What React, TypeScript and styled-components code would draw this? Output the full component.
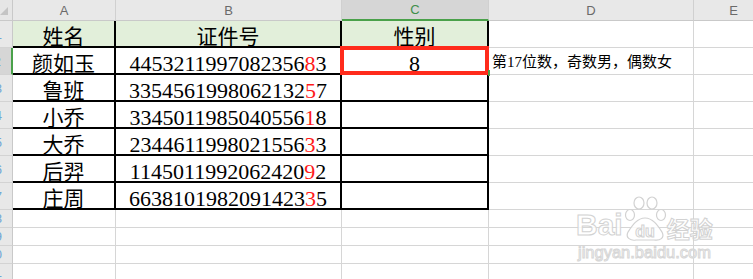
import React from 'react';
import styled, { createGlobalStyle, css } from 'styled-components';

const GlobalStyle = createGlobalStyle`
  html, body {
    margin: 0;
    padding: 0;
    background: #fff;
    overflow: hidden;
  }
  #root {
    width: 753px;
    height: 279px;
    overflow: hidden;
    position: relative;
  }
`;

const people = [
  { name: '颜如玉', id: '445321199708235683' },
  { name: '鲁班', id: '335456199806213257' },
  { name: '小乔', id: '334501198504055618' },
  { name: '大乔', id: '234461199802155633' },
  { name: '后羿', id: '114501199206242092' },
  { name: '庄周', id: '663810198209142335' },
];

const columns = ['A', 'B', 'C', 'D', 'E'];
const extraRows = [8, 9, 10, 11];

const Sheet = styled.div`
  display: grid;
  grid-template-columns: 13px 103px 226px 147px 205px 80px;
  grid-template-rows: 21px repeat(7, 27px) repeat(4, 18px);
  width: 774px;
  background: #fff;
`;

const Corner = styled.div`
  box-sizing: border-box;
  background: #e6e6e6;
  border-right: 1px solid #c9c9c9;
  border-bottom: 1px solid #c9c9c9;
  display: flex;
  align-items: flex-end;
  justify-content: flex-start;
  padding: 0 0 5px 0;
`;

const ColHead = styled.div<{ $active?: boolean }>`
  box-sizing: border-box;
  background: #e8e8e8;
  border-right: 1px solid #d0d0d0;
  border-bottom: 1px solid #c9c9c9;
  display: flex;
  align-items: center;
  justify-content: center;
  font-family: 'Liberation Sans', Arial, sans-serif;
  font-size: 13px;
  color: #6a6a6a;
  ${(p) =>
    p.$active &&
    css`
      background: #d6d6d6;
      border-bottom: 2px solid #4aa14a;
      color: #3f8f4a;
    `}
`;

const RowHead = styled.div<{ $active?: boolean }>`
  box-sizing: border-box;
  background: #e8e8e8;
  border-right: 1px solid #c9c9c9;
  border-bottom: 1px solid #d3d3d3;
  display: flex;
  align-items: center;
  justify-content: flex-end;
  padding-right: 10px;
  overflow: hidden;
  white-space: nowrap;
  font-family: 'Liberation Sans', Arial, sans-serif;
  font-size: 13px;
  color: #6ea6d6;
  ${(p) =>
    p.$active &&
    css`
      background: #d6d6d6;
      border-right: 2px solid #4aa14a;
    `}
`;

const Cell = styled.div<{ $header?: boolean; $table?: boolean; $left?: boolean }>`
  box-sizing: border-box;
  position: relative;
  border-right: 1px solid #d6d6d6;
  border-bottom: 1px solid #d6d6d6;
  display: flex;
  align-items: flex-end;
  justify-content: ${(p) => (p.$left ? 'flex-start' : 'center')};
  white-space: nowrap;
  color: #000;
  font-family: 'Liberation Serif', 'Noto Sans CJK SC', serif;
  font-size: 22px;
  line-height: 18px;
  ${(p) =>
    p.$table &&
    css`
      border-right: 2px solid #000;
      border-bottom: 2px solid #000;
    `}
  ${(p) =>
    p.$header &&
    css`
      background: #e2efda;
    `}
`;

const Cjk = styled.span`
  font-family: 'Noto Sans CJK SC', sans-serif;
  font-size: 21px;
  line-height: 20px;
  padding-bottom: 1px;
`;

const Note = styled.span`
  font-family: 'Liberation Serif', 'Noto Sans CJK SC', serif;
  font-size: 15px;
  line-height: 15px;
  padding: 0 0 4px 3px;
  position: relative;
  z-index: 2;
`;

const Red = styled.span`
  color: #ff1a1a;
`;

const Marked = styled.div`
  position: absolute;
  left: -2px;
  top: -2px;
  right: -2px;
  bottom: -2px;
  border: 4px solid #ff2b1c;
  pointer-events: none;
  z-index: 1;
`;

const FillHandle = styled.div`
  position: absolute;
  right: -3px;
  bottom: -3px;
  width: 2px;
  height: 6px;
  background: #4aa14a;
  z-index: 2;
`;

const Watermark = styled.div`
  position: absolute;
  left: 576px;
  top: 196px;
  display: flex;
  flex-direction: column;
  align-items: flex-start;
  pointer-events: none;
`;

const MarkTop = styled.div`
  display: flex;
  align-items: flex-end;
  height: 46px;
`;

const BaiText = styled.span`
  font-family: 'Liberation Sans', Arial, sans-serif;
  font-weight: bold;
  font-size: 30px;
  line-height: 30px;
  color: rgba(255, 255, 255, 0.85);
  -webkit-text-stroke: 1px #d2d2d2;
  padding-bottom: 2px;
`;

const JingYan = styled.span`
  font-family: 'Noto Sans CJK SC', sans-serif;
  font-weight: bold;
  font-size: 23px;
  line-height: 26px;
  color: rgba(255, 255, 255, 0.85);
  -webkit-text-stroke: 1px #d2d2d2;
  padding-bottom: 1px;
`;

const Url = styled.span`
  font-family: 'Liberation Sans', Arial, sans-serif;
  font-size: 16.5px;
  line-height: 20px;
  color: rgba(255, 255, 255, 0.85);
  -webkit-text-stroke: 1px #d6d6d6;
  margin-left: 2px;
`;

const Paw = () => (
  <svg width="44" height="46" viewBox="0 0 44 46">
    <g fill="rgba(255,255,255,0.85)" stroke="#d2d2d2" strokeWidth="1.2">
      <ellipse cx="7" cy="19" rx="4.5" ry="5.5" />
      <ellipse cx="16" cy="7" rx="5" ry="6" />
      <ellipse cx="29" cy="7" rx="5" ry="6" />
      <ellipse cx="38" cy="19" rx="4.5" ry="5.5" />
      <path d="M22 22 C 14 22, 9 30, 5 36 C 2 42, 8 45, 13 44 L 31 44 C 37 45, 42 42, 39 36 C 35 30, 30 22, 22 22 Z" />
    </g>
    <text
      x="22"
      y="41"
      textAnchor="middle"
      fontFamily="Liberation Sans, Arial, sans-serif"
      fontWeight="bold"
      fontSize="16"
      fill="rgba(255,255,255,0.9)"
      stroke="#d2d2d2"
      strokeWidth="1"
    >
      du
    </text>
  </svg>
);

const CornerMark = () => (
  <svg width="8" height="8" viewBox="0 0 8 8">
    <polygon points="8,0 8,8 0,8" fill="#c4c4c4" />
  </svg>
);

const IdNumber = ({ id }: { id: string }) => (
  <span>
    {id.slice(0, 16)}
    <Red>{id[16]}</Red>
    {id.slice(17)}
  </span>
);

const App = () => {
  return (
    <>
      <GlobalStyle />
      <Sheet>
        <Corner>
          <CornerMark />
        </Corner>
        {columns.map((c) => (
          <ColHead key={c} $active={c === 'C'}>
            {c}
          </ColHead>
        ))}

        <RowHead>1</RowHead>
        <Cell $table $header>
          <Cjk>姓名</Cjk>
        </Cell>
        <Cell $table $header>
          <Cjk>证件号</Cjk>
        </Cell>
        <Cell $table $header>
          <Cjk>性别</Cjk>
        </Cell>
        <Cell />
        <Cell />

        {people.map((p, i) => (
          <React.Fragment key={p.id}>
            <RowHead $active={i === 0}>{i + 2}</RowHead>
            <Cell $table>
              <Cjk>{p.name}</Cjk>
            </Cell>
            <Cell $table>
              <IdNumber id={p.id} />
            </Cell>
            <Cell $table>
              {i === 0 && (
                <>
                  <span>8</span>
                  <Marked />
                  <FillHandle />
                </>
              )}
            </Cell>
            <Cell $left>{i === 0 && <Note>第17位数，奇数男，偶数女</Note>}</Cell>
            <Cell />
          </React.Fragment>
        ))}

        {extraRows.map((r) => (
          <React.Fragment key={r}>
            <RowHead>{r}</RowHead>
            <Cell />
            <Cell />
            <Cell />
            <Cell />
            <Cell />
          </React.Fragment>
        ))}
      </Sheet>

      <Watermark>
        <MarkTop>
          <BaiText>Bai</BaiText>
          <Paw />
          <JingYan>经验</JingYan>
        </MarkTop>
        <Url>jingyan.baidu.com</Url>
      </Watermark>
    </>
  );
};

export default App;
